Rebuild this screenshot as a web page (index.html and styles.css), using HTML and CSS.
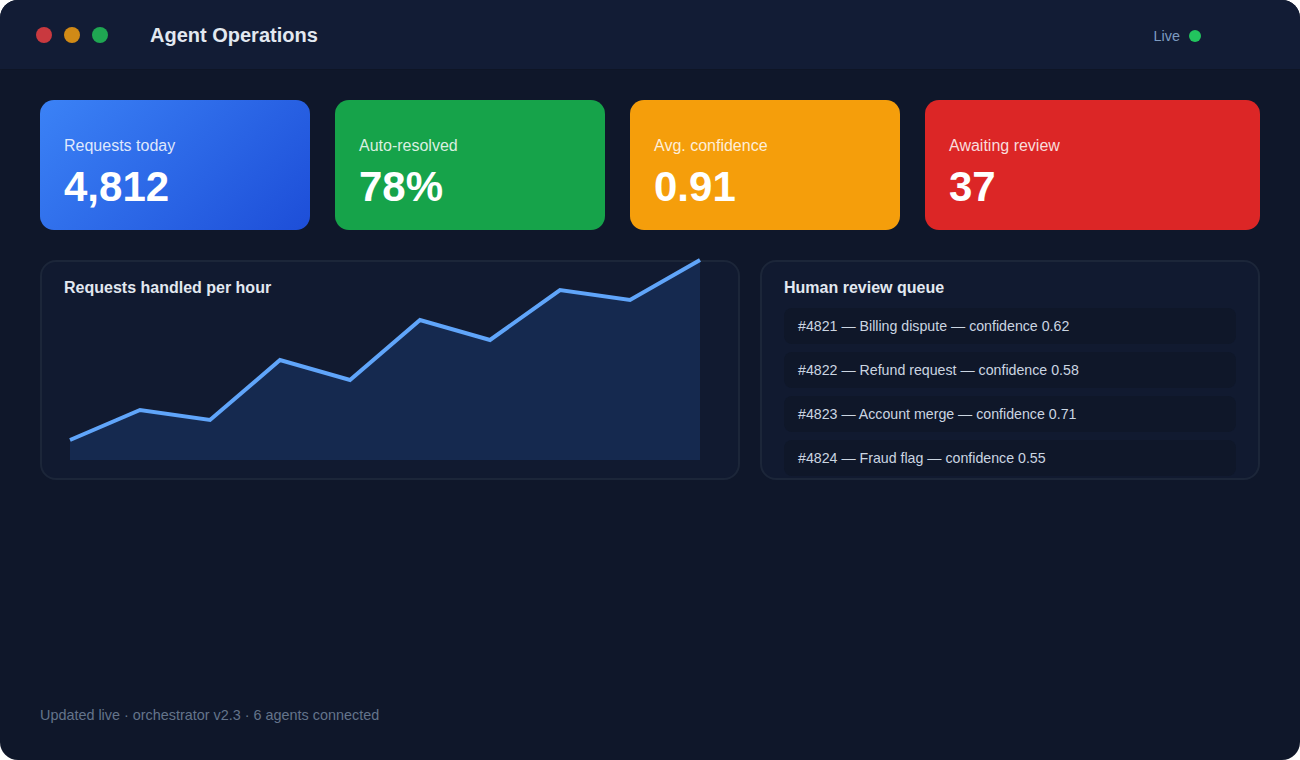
FILE: index.html
```html
<!DOCTYPE html>
<html lang="en">
<head>
    <meta charset="UTF-8">
    <title>Agent Operations</title>
    <link rel="stylesheet" href="styles.css">
</head>
<body>
<div class="window">
    <div class="header">
        <div class="dots">
            <span class="dot red"></span>
            <span class="dot amber"></span>
            <span class="dot green"></span>
        </div>
        <h1 class="title">Agent Operations</h1>
        <div class="live">Live <span class="live-dot"></span></div>
    </div>

    <div class="main">
        <div class="stats">
            <div class="stat blue">
                <div class="label">Requests today</div>
                <div class="value">4,812</div>
            </div>
            <div class="stat greenbg">
                <div class="label">Auto-resolved</div>
                <div class="value">78%</div>
            </div>
            <div class="stat orange">
                <div class="label">Avg. confidence</div>
                <div class="value">0.91</div>
            </div>
            <div class="stat redbg">
                <div class="label">Awaiting review</div>
                <div class="value">37</div>
            </div>
        </div>

        <div class="panels">
            <div class="panel chart">
                <h2 class="panel-title">Requests handled per hour</h2>
                <!-- 차트는 패널 좌표 그대로 그림 -->
                <svg class="chart-svg" width="700" height="220" viewBox="0 0 700 220">
                    <polygon points="30,180 100,150 170,160 240,100 310,120 380,60 450,80 520,30 590,40 660,0 660,200 30,200" fill="#15294f"/>
                    <polyline points="30,180 100,150 170,160 240,100 310,120 380,60 450,80 520,30 590,40 660,0" fill="none" stroke="#60a5fa" stroke-width="4"/>
                </svg>
            </div>
            <div class="panel queue">
                <h2 class="panel-title">Human review queue</h2>
                <ul class="queue-list">
                    <li>#4821 — Billing dispute — confidence 0.62</li>
                    <li>#4822 — Refund request — confidence 0.58</li>
                    <li>#4823 — Account merge — confidence 0.71</li>
                    <li>#4824 — Fraud flag — confidence 0.55</li>
                </ul>
            </div>
        </div>
    </div>

    <div class="footer">Updated live · orchestrator v2.3 · 6 agents connected</div>
</div>
</body>
</html>
```

FILE: styles.css
```css
html, body {
    margin: 0;
    background: #ffffff;
}
body {
    font-family: "Liberation Sans", Arial, sans-serif;
}
.window {
    width: 1300px;
    height: 760px;
    background: #0f172a;
    border-radius: 18px;
    overflow: hidden;
    display: flex;
    flex-direction: column;
}

/* 상단 바 */
.header {
    height: 70px;
    box-sizing: border-box;
    background: #121c35;
    border-bottom: 1px solid #0e1526;
    display: flex;
    align-items: center;
    padding: 0 99px 0 36px;
}
.dots {
    display: flex;
    gap: 12px;
}
.dot {
    width: 16px;
    height: 16px;
    border-radius: 50%;
}
.dot.red { background: #c9393f; }
.dot.amber { background: #d18a16; }
.dot.green { background: #1fa652; }
.title {
    margin: 0 0 0 42px;
    font-size: 20px;
    font-weight: bold;
    color: #e2e8f0;
    flex: 1;
    padding-top: 1px;
}
.live {
    font-size: 14.4px;
    color: #7d9bc1;
    display: flex;
    align-items: center;
    gap: 9px;
    padding-top: 3px;
}
.live-dot {
    width: 12px;
    height: 12px;
    border-radius: 50%;
    background: #22c55e;
}

/* 본문 */
.main {
    padding: 30px 40px 0;
}
.stats {
    display: grid;
    grid-template-columns: 270px 270px 270px 1fr;
    gap: 25px;
}
.stat {
    height: 130px;
    box-sizing: border-box;
    border-radius: 14px;
    padding: 37px 24px 0;
    color: #ffffff;
}
.stat .label {
    font-size: 16px;
    line-height: 18px;
    color: rgba(255, 255, 255, 0.85);
    margin-bottom: 8px;
}
.stat .value {
    font-size: 42px;
    line-height: 48px;
    font-weight: bold;
}
.stat.blue { background: linear-gradient(135deg, #3b82f6, #1d4ed8); }
.stat.greenbg { background: #16a34a; }
.stat.orange { background: #f59e0b; }
.stat.redbg { background: #dc2626; }

.panels {
    display: grid;
    grid-template-columns: 700px 1fr;
    gap: 20px;
    margin-top: 30px;
}
.panel {
    position: relative;
    height: 220px;
    box-sizing: border-box;
    background: #111a30;
    border: 2px solid #1c2639;
    border-radius: 16px;
    padding: 16px 22px 0;
    overflow: hidden;
}
.panel-title {
    margin: 0;
    font-size: 16px;
    line-height: 19px;
    font-weight: bold;
    color: #e2e8f0;
}
.chart {
    overflow: visible;
}
.chart-svg {
    position: absolute;
    left: -2px;
    top: -2px;
    overflow: visible;
}
.queue-list {
    list-style: none;
    margin: 11px 0 0;
    padding: 0;
    display: flex;
    flex-direction: column;
    gap: 8px;
}
.queue-list li {
    height: 36px;
    box-sizing: border-box;
    background: #0f1729;
    border-radius: 8px;
    padding: 0 14px;
    display: flex;
    align-items: center;
    font-size: 14.2px;
    color: #cbd5e1;
}

.footer {
    margin-top: auto;
    padding: 0 40px 37px;
    font-size: 14.4px;
    line-height: 16px;
    color: #64748b;
}
```
